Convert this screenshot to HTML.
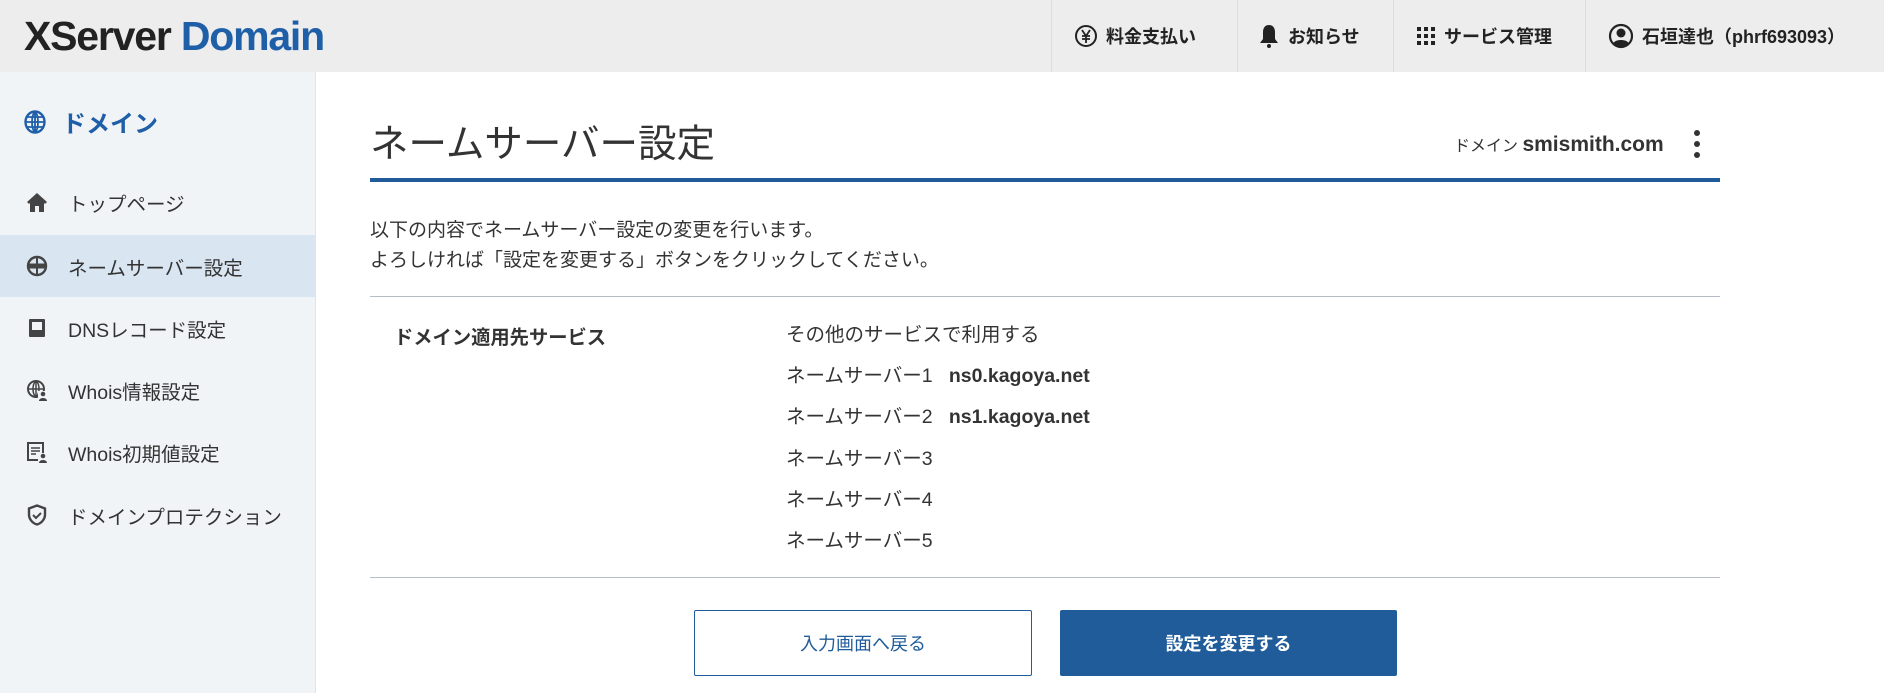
<!DOCTYPE html>
<html><head><meta charset="utf-8"><style>
*{margin:0;padding:0;box-sizing:border-box}
body{width:1884px;height:693px;overflow:hidden;background:#fff;font-family:"Liberation Sans","Noto Sans CJK JP",sans-serif;color:#333;position:relative}
.hdr{position:absolute;left:0;top:0;width:1884px;height:72px;background:#ededed}
.logo{position:absolute;left:24px;top:13px;font-size:41px;font-weight:bold;letter-spacing:-1.2px;color:#222}
.logo span{color:#1f5fa8}
.hi{position:absolute;top:0;height:72px;border-left:1px solid #dcdcdc;display:flex;align-items:center;font-size:18px;font-weight:bold;color:#222}
.hi svg{margin-right:8px}
.side{position:absolute;left:0;top:72px;width:316px;height:621px;background:#f1f4f7;border-right:1px solid #e0e4e8}
.dom{position:absolute;left:24px;top:104px;display:flex;align-items:center;font-size:24px;font-weight:bold;color:#1f5fa8}
.nav{position:absolute;left:0;width:316px;height:62px;display:flex;align-items:center;padding-left:26px;font-size:19.5px;color:#333}
.nav svg{margin-right:20px}
.nav.act{background:#d9e5f0}
.abs{position:absolute;white-space:nowrap}
.btn{position:absolute;top:610px;height:66px;display:flex;align-items:center;justify-content:center;font-size:18px;border-radius:2px}
</style></head><body>
<div class="hdr">
<div class="logo">XServer <span>Domain</span></div>
<div class="hi" style="left:1051px;width:186px;padding-left:22px"><svg width="24" height="24" viewBox="0 0 24 24"><circle cx="12" cy="12" r="10" fill="none" stroke="#222" stroke-width="2"/><path d="M8 6l4 6 4-6M12 12v7M8 12h8M8 15h8" stroke="#222" stroke-width="1.8" fill="none"/></svg>料金支払い</div>
<div class="hi" style="left:1237px;width:156px;padding-left:20px"><svg width="22" height="26" viewBox="0 0 22 26"><path d="M11 2c-4 0-6 3-6 7v7l-3 4h18l-3-4V9c0-4-2-7-6-7z" fill="#222"/><circle cx="11" cy="23" r="2" fill="#222"/></svg>お知らせ</div>
<div class="hi" style="left:1393px;width:192px;padding-left:22px"><svg width="20" height="20" viewBox="0 0 20 20" fill="#222"><rect x="1" y="1" width="4" height="4"/><rect x="8" y="1" width="4" height="4"/><rect x="15" y="1" width="4" height="4"/><rect x="1" y="8" width="4" height="4"/><rect x="8" y="8" width="4" height="4"/><rect x="15" y="8" width="4" height="4"/><rect x="1" y="15" width="4" height="4"/><rect x="8" y="15" width="4" height="4"/><rect x="15" y="15" width="4" height="4"/></svg>サービス管理</div>
<div class="hi" style="left:1585px;width:299px;padding-left:22px"><svg width="26" height="26" viewBox="0 0 26 26"><circle cx="13" cy="13" r="11" fill="none" stroke="#222" stroke-width="2.2"/><circle cx="13" cy="10" r="4.5" fill="#222"/><path d="M5.5 20c2-4 13-4 15 0l-3 3h-9z" fill="#222"/></svg>石垣達也（phrf693093）</div>
</div>
<div class="side">
</div>
<div class="dom"><svg width="22" height="24" viewBox="0 0 22 24" style="margin-right:16px"><ellipse cx="11" cy="12" rx="9.5" ry="10.5" fill="none" stroke="#1f5fa8" stroke-width="2.4"/><path d="M11 2v20M2 12h18M3.5 7h15M3.5 17h15M11 2c-4 3-4 17 0 20M11 2c4 3 4 17 0 20" stroke="#1f5fa8" stroke-width="1.8" fill="none"/></svg>ドメイン</div>
<div class="nav" style="top:171px"><svg width="22" height="22" viewBox="0 0 22 22"><path d="M11 2L1 11l2 2 1-1v9h5v-6h4v6h5v-9l1 1 2-2z" fill="#444"/></svg>トップページ</div>
<div class="nav act" style="top:235px"><svg width="22" height="22" viewBox="0 0 22 22"><circle cx="11" cy="11" r="9" fill="none" stroke="#444" stroke-width="2.4"/><rect x="1" y="8.5" width="20" height="5" fill="#444"/><path d="M11 2v18" stroke="#444" stroke-width="2"/></svg>ネームサーバー設定</div>
<div class="nav" style="top:297px"><svg width="22" height="22" viewBox="0 0 22 22"><rect x="3" y="2" width="16" height="18" rx="1" fill="#444"/><rect x="6" y="5" width="10" height="8" fill="#f1f4f7"/></svg>DNSレコード設定</div>
<div class="nav" style="top:359px"><svg width="22" height="22" viewBox="0 0 22 22"><circle cx="10" cy="10" r="8" fill="none" stroke="#444" stroke-width="2"/><path d="M2 10h16M10 2v16M10 2c-4 3-4 13 0 16M10 2c4 3 4 13 0 16" stroke="#444" stroke-width="1.5" fill="none"/><rect x="12" y="12" width="10" height="10" fill="#f1f4f7"/><circle cx="17" cy="15" r="2.3" fill="#444"/><path d="M13 22c0-4 8-4 8 0z" fill="#444"/></svg>Whois情報設定</div>
<div class="nav" style="top:421px"><svg width="22" height="22" viewBox="0 0 22 22"><rect x="2" y="2" width="15" height="17" fill="none" stroke="#444" stroke-width="2"/><path d="M5 7h9M5 10h9M5 13h5" stroke="#444" stroke-width="1.6"/><rect x="12" y="12" width="10" height="10" fill="#f1f4f7"/><circle cx="17" cy="15" r="2.3" fill="#444"/><path d="M13 22c0-4 8-4 8 0z" fill="#444"/></svg>Whois初期値設定</div>
<div class="nav" style="top:484px"><svg width="22" height="22" viewBox="0 0 22 22"><path d="M11 1.5l8 3v6c0 5-4 9-8 10-4-1-8-5-8-10v-6z" fill="none" stroke="#444" stroke-width="2.4"/><path d="M7 11l3 3 5-5" stroke="#444" stroke-width="2" fill="none"/></svg>ドメインプロテクション</div>

<div class="abs" style="left:370px;top:113px;font-size:38.5px;color:#333">ネームサーバー設定</div>
<div class="abs" style="left:1454px;top:132px;font-size:16px;color:#333">ドメイン <b style="font-size:21px">smismith.com</b></div>
<svg class="abs" style="left:1692px;top:128px" width="10" height="32" viewBox="0 0 10 32"><circle cx="5" cy="5" r="3" fill="#333"/><circle cx="5" cy="16" r="3" fill="#333"/><circle cx="5" cy="27" r="3" fill="#333"/></svg>
<div class="abs" style="left:370px;top:178px;width:1350px;height:4px;background:#1f5c99"></div>
<div class="abs" style="left:370px;top:216px;font-size:19px;line-height:30px;color:#333">以下の内容でネームサーバー設定の変更を行います。<br>よろしければ「設定を変更する」ボタンをクリックしてください。</div>
<div class="abs" style="left:370px;top:296px;width:1350px;height:1px;background:#b5bec8"></div>
<div class="abs" style="left:394px;top:322px;font-size:19.3px;font-weight:bold;color:#333">ドメイン適用先サービス</div>
<div class="abs" style="left:786px;top:315px;font-size:19.5px;line-height:41.2px;color:#333">その他のサービスで利用する<br>ネームサーバー1 &nbsp; <b>ns0.kagoya.net</b><br>ネームサーバー2 &nbsp; <b>ns1.kagoya.net</b><br>ネームサーバー3<br>ネームサーバー4<br>ネームサーバー5</div>
<div class="abs" style="left:370px;top:577px;width:1350px;height:1px;background:#b5bec8"></div>
<div class="btn" style="left:694px;width:338px;border:1px solid #1f5c99;color:#1f5c99;background:#fff">入力画面へ戻る</div>
<div class="btn" style="left:1060px;width:337px;background:#1f5c99;color:#fff;font-weight:bold">設定を変更する</div>
</body></html>
